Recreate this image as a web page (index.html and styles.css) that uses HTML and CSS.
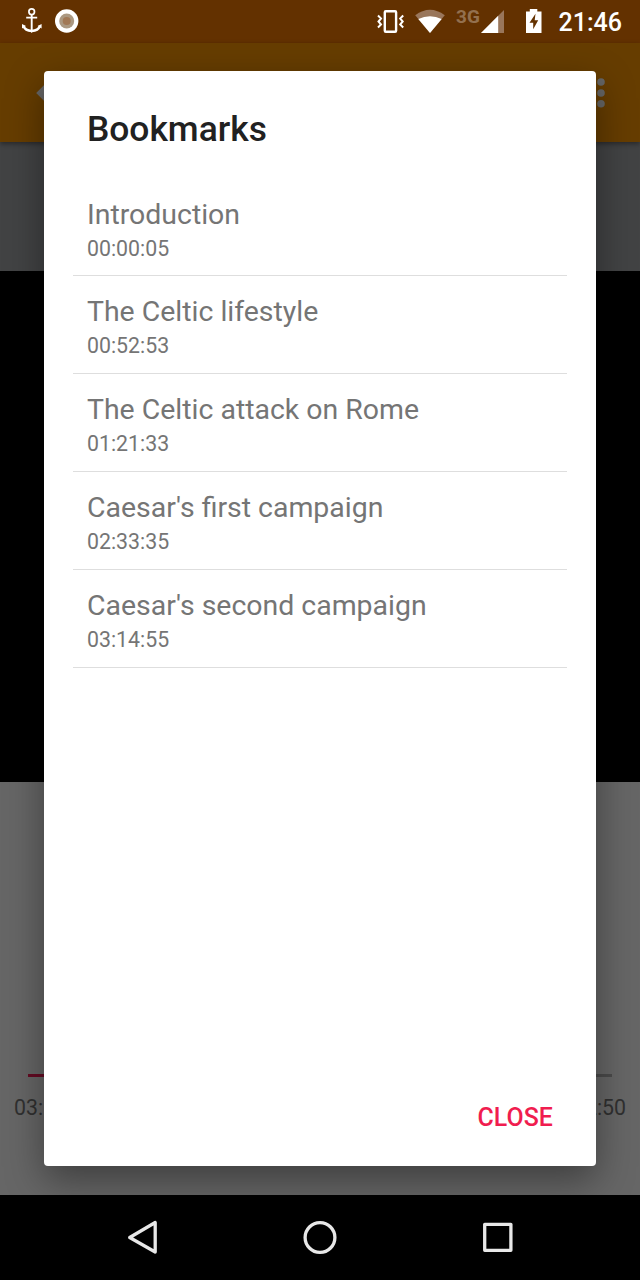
FILE: index.html
```html
<!DOCTYPE html>
<html lang="en">
<head>
<meta charset="utf-8">
<title>Bookmarks</title>
<link rel="stylesheet" href="styles.css">
</head>
<body>
<div class="screen">
  <header class="status-bar">
    <svg class="status-icons" width="90" height="43" viewBox="0 0 90 43" fill="none" stroke="#fff">
      <circle cx="31.7" cy="11.7" r="2.8" stroke-width="1.7"/>
      <path d="M31.7 14.5V31M26.2 17.6h11" stroke-width="1.9"/>
      <path d="M23.500 26c1.300 3.700 4.400 4.800 8.200 5 3.800-.2 6.900-1.300 8.200-5" stroke-width="2.300"/>
      <path d="M22 24v4.500l4-2.400zM41.600 24v4.500l-4-2.400zM30 30.500l1.700 2.500 1.700-2.500z" fill="#fff" stroke="none"/>
      <circle cx="66.700" cy="21" r="11.700" fill="#fff" stroke="none"/>
      <circle cx="66.700" cy="21" r="7.500" fill="#ab9881" stroke="none"/>
      <circle cx="66.700" cy="21" r="4" fill="#a17855" stroke="none"/>
    </svg>
    <div class="status-right">
      <svg width="76" height="43" viewBox="372 0 76 43" fill="none">
        <rect x="384.800" y="11.200" width="11.300" height="20.600" rx="1" stroke="#fff" stroke-width="2.400"/>
        <path d="M378 15.500l3 3-2.500 3 2.500 3-3 3M403.200 15.500l-3 3 2.500 3-2.500 3 3 3" stroke="#fff" stroke-width="2"/>
        <path d="M415.200 15.300Q430 4.300 444.800 15.300L430 33z" fill="#99765b"/>
        <path d="M418.300 19Q430 13.300 441.700 19L430 33z" fill="#fff"/>
      </svg>
      <span class="network">3G</span>
      <svg width="66" height="43" viewBox="480 0 66 43">
        <path d="M481 33L504 10V33z" fill="#99765b"/>
        <path d="M481 33L498.200 15.800V33z" fill="#fff"/>
        <path d="M526 11.500h3.800V9h7.500v2.500h4.200V33H526z" fill="#fff"/>
        <path d="M535.500 13.800l-6 9h3.700v6.500l5-9h-3.500z" fill="#633100"/>
      </svg>
      <time class="clock">21:46</time>
    </div>
  </header>
  <div class="toolbar">
    <svg width="30" height="32" viewBox="0 0 30 32" fill="none" stroke="#666" stroke-width="4"><path d="M28 16H5M16 4L4 16l12 12"/></svg>
    <svg width="10" height="32" viewBox="0 0 10 32" fill="#666"><circle cx="5" cy="5" r="3.800"/><circle cx="5" cy="16" r="3.800"/><circle cx="5" cy="26.700" r="3.800"/></svg>
  </div>
  <div class="heading"></div>
  <div class="cover"></div>
  <div class="player">
    <div class="track"><div class="played"></div></div>
    <div class="times"><span>03:14:55</span><span>03:52:50</span></div>
  </div>
  <nav class="nav-bar">
    <svg width="640" height="85" viewBox="0 1195 640 85" fill="none" stroke="#e8e8e8" stroke-width="3.300" stroke-linejoin="round">
      <path d="M155.200 1222.500v29.500L129.700 1237.500z"/>
      <circle cx="320" cy="1237.500" r="14.900"/>
      <rect x="484.700" y="1224.300" width="26.200" height="26"/>
    </svg>
  </nav>
  <section class="dialog">
    <h1 class="title">Bookmarks</h1>
    <ul class="bookmarks">
      <li class="bookmark"><span class="name">Introduction</span><time class="position">00:00:05</time></li>
      <li class="bookmark"><span class="name">The Celtic lifestyle</span><time class="position">00:52:53</time></li>
      <li class="bookmark"><span class="name">The Celtic attack on Rome</span><time class="position">01:21:33</time></li>
      <li class="bookmark"><span class="name">Caesar's first campaign</span><time class="position">02:33:35</time></li>
      <li class="bookmark"><span class="name">Caesar's second campaign</span><time class="position">03:14:55</time></li>
    </ul>
    <button class="close">CLOSE</button>
  </section>
</div>
</body>
</html>
```
FILE: styles.css
```css
* { box-sizing: border-box; }
body { margin: 0; font-family: Roboto, "Liberation Sans", sans-serif; }
svg { display: block; flex: none; }
.screen { position: relative; width: 640px; height: 1280px; display: flex; flex-direction: column; overflow: hidden; background: #000; }
.status-bar { height: 43px; flex: none; display: flex; justify-content: space-between; background: #633100; color: #fff; }
.status-right { display: flex; width: 268px; }
.network { width: 32px; padding: 6px 0 0 8px; font-size: 19px; line-height: 22px; font-weight: 700; color: #93704f; }
.clock { padding: 8px 0 0 12.500px; font-size: 25px; line-height: 29px; font-weight: 500; white-space: nowrap; }
.toolbar { height: 99px; flex: none; display: flex; justify-content: space-between; align-items: center; padding: 0 34px 0 35px; background: #663d00; box-shadow: 0 2px 5px rgba(0,0,0,.4); z-index: 1; }
.heading { height: 129px; flex: none; background: #424344; }
.cover { height: 511px; flex: none; background: #000; }
.player { height: 413px; flex: none; padding: 292px 14px 0; background: #666; }
.track { height: 3px; margin: 0 14px; background: #4b4b4b; }
.played { width: 84%; height: 3px; background: #650b23; }
.times { display: flex; justify-content: space-between; margin-top: 18px; font-size: 21.300px; line-height: 25px; color: #303030; }
.nav-bar { height: 85px; flex: none; background: #000; z-index: 2; }
.dialog { position: absolute; z-index: 1; top: 71px; left: 44.400px; width: 551.400px; height: 1095px; display: flex; flex-direction: column; border-radius: 4px; background: #fff; box-shadow: 0 14px 38px rgba(0,0,0,.4); }
.title { margin: 37px 42.500px 0; font-size: 35.400px; line-height: 42px; font-weight: 500; color: #212121; }
.bookmarks { list-style: none; margin: 28.700px 28.600px 0; padding: 0; }
.bookmark { height: 97.800px; padding: 19px 14px 0; display: flex; flex-direction: column; border-bottom: 1.500px solid #dedede; color: #757575; }
.name { font-size: 28.450px; line-height: 34px; }
.position { margin-top: 4px; font-size: 21.300px; line-height: 25px; }
.close { margin: auto 43px 33px auto; padding: 0; border: 0; background: none; font: 500 24.900px/30px Roboto, "Liberation Sans", sans-serif; color: #f01d4f; }
```
